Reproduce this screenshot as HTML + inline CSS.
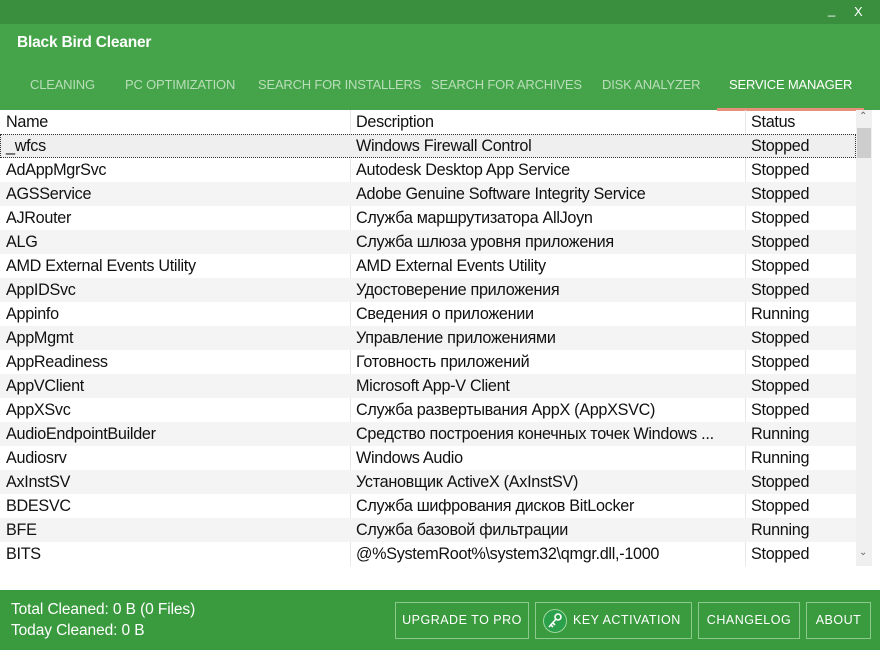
<!DOCTYPE html>
<html><head><meta charset="utf-8"><style>
*{margin:0;padding:0;box-sizing:border-box}
body{width:880px;height:650px;overflow:hidden;background:#fff;font-family:"Liberation Sans",Arial,sans-serif;position:relative}
.top{position:absolute;left:0;top:0;width:880px;height:24px;background:#3a8f3e;color:#fff}
.hdr{position:absolute;left:0;top:24px;width:880px;height:86px;background:#45a349}
.title{position:absolute;left:17px;top:10px;color:#fff;font-size:15.5px;font-weight:bold;letter-spacing:-0.2px}
.tab{position:absolute;top:53px;font-size:13px;color:#b9deb9;letter-spacing:-0.2px}
.ul{position:absolute;left:717px;top:84px;width:147px;height:3px;background:#e8907a}
.row{position:absolute;left:0;width:856px;height:24px;font-size:16.2px;color:#111;letter-spacing:-0.3px}
.row span{position:absolute;top:3px;white-space:nowrap}
.g{background:#f4f4f4}
.c1{left:6px}.c2{left:356px}.c3{left:751px}
.sep{position:absolute;top:110px;width:1px;height:456px;background:#e8e8e8}
.foot{position:absolute;left:0;top:590px;width:880px;height:60px;background:#3a9a3e;color:#fff}
.btn{position:absolute;top:12px;height:37px;border:1px solid #8cc98c;font-size:12.5px;letter-spacing:0.5px;line-height:35px;text-align:center;color:#fff}
</style></head><body>
<div class="top"><span style="position:absolute;left:828px;top:2px;font-size:13px">_</span><span style="position:absolute;left:854px;top:4px;font-size:13px">X</span></div>
<div class="hdr">
<div class="title">Black Bird Cleaner</div>
<div class="tab" style="left:30px">CLEANING</div>
<div class="tab" style="left:125px">PC OPTIMIZATION</div>
<div class="tab" style="left:258px">SEARCH FOR INSTALLERS</div>
<div class="tab" style="left:431px">SEARCH FOR ARCHIVES</div>
<div class="tab" style="left:602px">DISK ANALYZER</div>
<div class="tab" style="left:729px;color:#fff">SERVICE MANAGER</div>
<div class="ul"></div>
</div>
<div class="sep" style="left:350px"></div><div class="sep" style="left:745px"></div>
<div class="row" style="top:110px;background:transparent"><span class="c1">Name</span><span class="c2">Description</span><span class="c3">Status</span></div>
<div class="row" style="top:134px;background:#efefef;border:1px dotted #333"><span class="c1" style="left:5px;top:2px">_wfcs</span><span class="c2" style="left:355px;top:2px">Windows Firewall Control</span><span class="c3" style="left:750px;top:2px">Stopped</span></div>
<div class="row" style="top:158px"><span class="c1">AdAppMgrSvc</span><span class="c2">Autodesk Desktop App Service</span><span class="c3">Stopped</span></div>
<div class="row g" style="top:182px"><span class="c1">AGSService</span><span class="c2">Adobe Genuine Software Integrity Service</span><span class="c3">Stopped</span></div>
<div class="row" style="top:206px"><span class="c1">AJRouter</span><span class="c2">Служба маршрутизатора AllJoyn</span><span class="c3">Stopped</span></div>
<div class="row g" style="top:230px"><span class="c1">ALG</span><span class="c2">Служба шлюза уровня приложения</span><span class="c3">Stopped</span></div>
<div class="row" style="top:254px"><span class="c1">AMD External Events Utility</span><span class="c2">AMD External Events Utility</span><span class="c3">Stopped</span></div>
<div class="row g" style="top:278px"><span class="c1">AppIDSvc</span><span class="c2">Удостоверение приложения</span><span class="c3">Stopped</span></div>
<div class="row" style="top:302px"><span class="c1">Appinfo</span><span class="c2">Сведения о приложении</span><span class="c3">Running</span></div>
<div class="row g" style="top:326px"><span class="c1">AppMgmt</span><span class="c2">Управление приложениями</span><span class="c3">Stopped</span></div>
<div class="row" style="top:350px"><span class="c1">AppReadiness</span><span class="c2">Готовность приложений</span><span class="c3">Stopped</span></div>
<div class="row g" style="top:374px"><span class="c1">AppVClient</span><span class="c2">Microsoft App-V Client</span><span class="c3">Stopped</span></div>
<div class="row" style="top:398px"><span class="c1">AppXSvc</span><span class="c2">Служба развертывания AppX (AppXSVC)</span><span class="c3">Stopped</span></div>
<div class="row g" style="top:422px"><span class="c1">AudioEndpointBuilder</span><span class="c2">Средство построения конечных точек Windows ...</span><span class="c3">Running</span></div>
<div class="row" style="top:446px"><span class="c1">Audiosrv</span><span class="c2">Windows Audio</span><span class="c3">Running</span></div>
<div class="row g" style="top:470px"><span class="c1">AxInstSV</span><span class="c2">Установщик ActiveX (AxInstSV)</span><span class="c3">Stopped</span></div>
<div class="row" style="top:494px"><span class="c1">BDESVC</span><span class="c2">Служба шифрования дисков BitLocker</span><span class="c3">Stopped</span></div>
<div class="row g" style="top:518px"><span class="c1">BFE</span><span class="c2">Служба базовой фильтрации</span><span class="c3">Running</span></div>
<div class="row" style="top:542px"><span class="c1">BITS</span><span class="c2">@%SystemRoot%\system32\qmgr.dll,-1000</span><span class="c3">Stopped</span></div>
<div style="position:absolute;left:856px;top:110px;width:16px;height:456px;background:#f0f0f0"></div>
<div style="position:absolute;left:857px;top:128px;width:14px;height:30px;background:#cdcdcd"></div>
<div style="position:absolute;left:859px;top:111px;font-size:10px;color:#666">&#8963;</div>
<div style="position:absolute;left:859px;top:547px;font-size:10px;color:#666">&#8964;</div>
<div class="foot">
<div style="position:absolute;left:11px;top:9px;font-size:15.5px;line-height:21px;letter-spacing:-0.1px">Total Cleaned: 0 B (0 Files)<br>Today Cleaned: 0 B</div>
<div class="btn" style="left:395px;width:134px">UPGRADE TO PRO</div>
<div class="btn" style="left:535px;width:157px;text-align:left;padding-left:37px">KEY ACTIVATION
<span style="position:absolute;left:7px;top:6px;width:24px;height:24px;border-radius:50%;background:#2aa04a;border:1px solid #9ed79e"><svg width="22" height="22" viewBox="0 0 22 22" style="position:absolute;left:0;top:0"><circle cx="14" cy="7" r="3" fill="none" stroke="#fff" stroke-width="1.6"/><path d="M12 9 L5 17 M7 15 L9 17 M9 13 L11 15" stroke="#fff" stroke-width="1.6" fill="none"/></svg></span></div>
<div class="btn" style="left:698px;width:102px">CHANGELOG</div>
<div class="btn" style="left:806px;width:65px">ABOUT</div>
</div>
</body></html>
